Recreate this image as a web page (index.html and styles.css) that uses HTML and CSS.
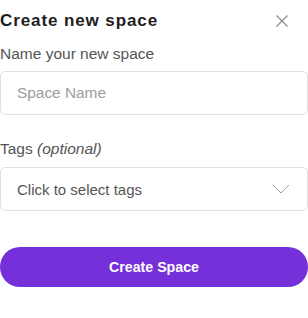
FILE: index.html
```html
<!DOCTYPE html>
<html lang="en">
<head>
    <meta charset="UTF-8">
    <meta name="viewport" content="width=device-width, initial-scale=1.0">
    <title>Create new space</title>
    <link rel="stylesheet" href="styles.css">
</head>
<body>
    <div class="modal">
        <div class="modal-header">
            <h1 class="modal-title">Create new space</h1>
            <button class="close-btn" aria-label="Close">
                <svg width="12" height="12" viewBox="0 0 12 12">
                    <path d="M0.5 0.5 L11.5 11.5 M11.5 0.5 L0.5 11.5" stroke="#8a8a8a" stroke-width="1.2" fill="none"/>
                </svg>
            </button>
        </div>

        <label class="field-label" for="space-name">Name your new space</label>
        <input type="text" id="space-name" class="text-input" placeholder="Space Name">

        <label class="field-label tags-label">Tags <em>(optional)</em></label>
        <div class="select-box">
            <span class="select-text">Click to select tags</span>
            <svg class="chevron" width="18" height="10" viewBox="0 0 18 10">
                <path d="M1 1 L9 9 L17 1" stroke="#a0a0a0" stroke-width="1" fill="none"/>
            </svg>
        </div>

        <button class="create-btn">Create Space</button>
    </div>
</body>
</html>
```

FILE: styles.css
```css
body {
    margin: 0;
    background-color: #fff;
    font-family: "Liberation Sans", Arial, sans-serif;
}
.modal {
    display: flex;
    flex-direction: column;
    width: 308px;
}
.modal-header {
    display: flex;
    justify-content: space-between;
    align-items: center;
    height: 28px;
    margin-top: 7px;
}
.modal-title {
    margin: 0;
    font-size: 17px;
    font-weight: bold;
    letter-spacing: 0.9px;
    color: #1e1e1e;
}
.close-btn {
    background: none;
    border: none;
    padding: 0;
    margin-right: 20px;
    display: flex;
    cursor: pointer;
}
.field-label {
    font-size: 15.5px;
    color: #555;
    margin-top: 9px;
    line-height: 20px;
}
.field-label em {
    font-style: italic;
}
.text-input {
    box-sizing: border-box;
    width: 308px;
    height: 44px;
    margin-top: 7px;
    padding: 0 16px;
    border: 1px solid #e0e0e0;
    border-radius: 5px;
    font-family: inherit;
    font-size: 15.4px;
    color: #333;
    outline: none;
}
.text-input::placeholder {
    color: #9d9d9d;
}
.tags-label {
    margin-top: 24px;
}
.select-box {
    box-sizing: border-box;
    display: flex;
    justify-content: space-between;
    align-items: center;
    height: 44px;
    margin-top: 8px;
    padding: 0 17px 0 16px;
    border: 1px solid #e0e0e0;
    border-radius: 5px;
    cursor: pointer;
}
.select-text {
    font-size: 15px;
    color: #555;
}
.create-btn {
    height: 40px;
    margin-top: 36px;
    border: none;
    border-radius: 20px;
    background-color: #7530d9;
    color: #fff;
    font-family: inherit;
    font-size: 14.2px;
    font-weight: bold;
    cursor: pointer;
}
```
